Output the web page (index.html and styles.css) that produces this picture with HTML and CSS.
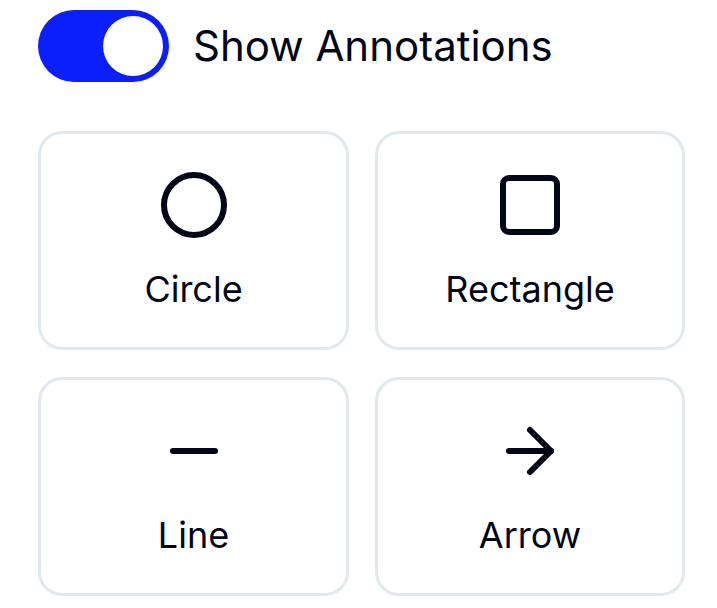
FILE: index.html
```html
<!DOCTYPE html>
<html lang="en">
<head>
<meta charset="utf-8">
<title>Annotations</title>
<link rel="stylesheet" href="styles.css">
</head>
<body>
<div class="panel">
  <div class="toggle-row">
    <div class="toggle"><div class="knob"></div></div>
    <span class="toggle-label">Show Annotations</span>
  </div>
  <div class="grid">
    <div class="card">
      <svg class="icon" viewBox="0 0 24 24" fill="none" stroke="currentColor" stroke-width="2" stroke-linecap="round" stroke-linejoin="round"><circle cx="12" cy="12" r="10"/></svg>
      <span class="card-label">Circle</span>
    </div>
    <div class="card">
      <svg class="icon" viewBox="0 0 24 24" fill="none" stroke="currentColor" stroke-width="2" stroke-linecap="round" stroke-linejoin="round"><rect x="3" y="3" width="18" height="18" rx="2"/></svg>
      <span class="card-label">Rectangle</span>
    </div>
    <div class="card">
      <svg class="icon" viewBox="0 0 24 24" fill="none" stroke="currentColor" stroke-width="2" stroke-linecap="round" stroke-linejoin="round"><path d="M5 12h14"/></svg>
      <span class="card-label">Line</span>
    </div>
    <div class="card">
      <svg class="icon" viewBox="0 0 24 24" fill="none" stroke="currentColor" stroke-width="2" stroke-linecap="round" stroke-linejoin="round"><path d="M5 12h14"/><path d="m12 5 7 7-7 7"/></svg>
      <span class="card-label">Arrow</span>
    </div>
  </div>
</div>
</body>
</html>
```
FILE: styles.css
```css
* { box-sizing: border-box; }
html, body { margin: 0; background: #ffffff; }
body {
  font-family: Inter, "Noto Sans", sans-serif;
  color: #020617;
}
.panel {
  padding: 10px 32px 0 38px;
  display: flex;
  flex-direction: column;
  gap: 49px;
}
.toggle-row {
  display: flex;
  align-items: center;
  gap: 24px;
}
.toggle {
  width: 131px;
  height: 72px;
  border-radius: 36px;
  background: #0a1ffb;
  display: flex;
  align-items: center;
  justify-content: flex-end;
  padding: 0 6px;
}
.knob {
  width: 60px;
  height: 60px;
  border-radius: 50%;
  background: #ffffff;
}
.toggle-label {
  font-size: 42px;
  line-height: 60px;
  font-weight: 400;
}
.grid {
  display: grid;
  grid-template-columns: 311px 310px;
  gap: 27px 26px;
}
.card {
  height: 219px;
  border: 3px solid #e2e8f0;
  border-radius: 24px;
  display: flex;
  flex-direction: column;
  align-items: center;
  padding-top: 35px;
  gap: 27px;
}
.icon {
  width: 72px;
  height: 72px;
  display: block;
  color: #020617;
}
.card-label {
  font-size: 36px;
  line-height: 42px;
}
```
